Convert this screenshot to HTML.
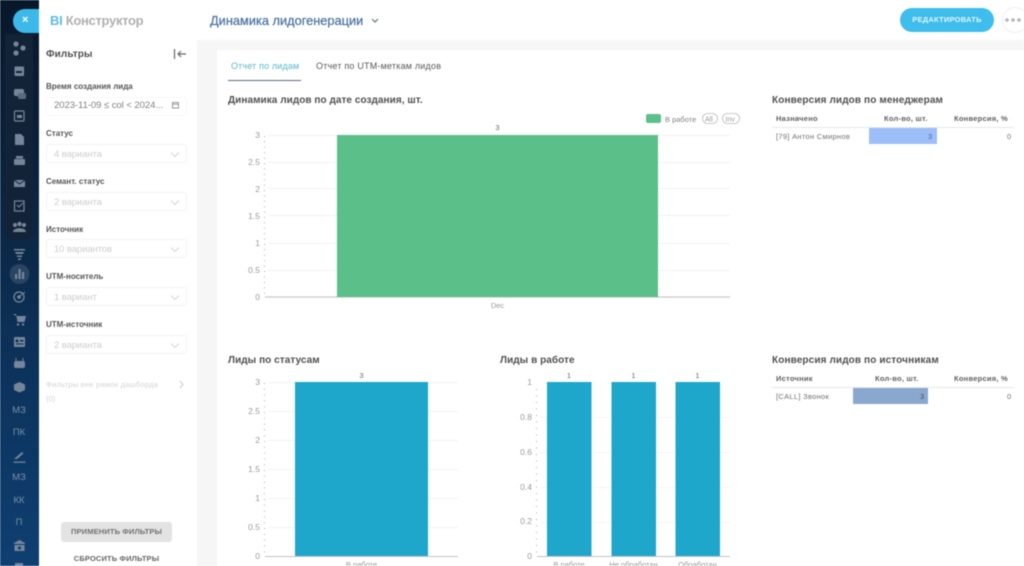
<!DOCTYPE html>
<html lang="ru"><head><meta charset="utf-8"><style>
html,body{margin:0;padding:0;background:#fff}
body{width:1024px;height:566px;overflow:hidden;position:relative;font-family:"Liberation Sans","Noto Sans CJK SC",sans-serif}
.a{position:absolute;white-space:nowrap}
#w{position:absolute;left:0;top:0;width:1024px;height:566px;overflow:hidden;filter:blur(.5px)}
.lb{left:46px;font-size:8px;font-weight:bold;color:#555;letter-spacing:0}
.sel{left:46px;width:141px;height:19px;box-sizing:border-box;border:1px solid #f3f3f3;border-radius:3px;background:#fff;font-size:9.5px;color:#cdcdcd;line-height:19px;text-indent:7px;letter-spacing:-.1px}
.sel svg{position:absolute;right:6px;top:6px}
.h{font-size:10px;font-weight:bold;color:#505050;letter-spacing:.05px}
.th{font-size:7.5px;font-weight:bold;color:#5f5f5f;letter-spacing:.25px}
.td{font-size:7.5px;color:#707070;letter-spacing:.3px}
.nt{left:6px;width:26px;text-align:center;color:#7a8fa6;font-size:9.5px}
</style></head><body><div id="w">

<!-- left navigation -->
<div class="a" style="left:0;top:0;width:39px;height:566px;background:linear-gradient(180deg,#08182b 0%,#0b2440 35%,#0c3158 60%,#0f3f72 100%)"></div>
<div class="a" style="left:5px;top:34px;width:28px;height:206px;background:#122338;border-radius:0 0 9px 9px"></div>
<div class="a" style="left:13px;top:9px;width:26px;height:24px;background:#3db9e9;border-radius:12px 0 0 12px"></div>
<div class="a" style="left:22px;top:14px;font-size:11px;color:#fff;font-weight:bold">×</div>

<svg class="a" style="left:0;top:0" width="39" height="566" fill="#75869a">
<circle cx="16" cy="44" r="2.600"/><circle cx="23" cy="48" r="2.600"/><circle cx="16" cy="53" r="2.600"/>
<rect x="14.500" y="66.500" width="9.500" height="9.500" rx="1"/><rect x="16" y="71" width="6" height="2" fill="#122338"/>
<rect x="14" y="89" width="10" height="7" rx="1.5"/><rect x="18" y="93" width="8" height="6" rx="1.5" fill="#5a6b80"/>
<rect x="14.5" y="111" width="9.5" height="10" rx="1" fill="none" stroke="#75869a" stroke-width="1.2"/><rect x="17" y="115" width="5" height="3"/>
<path d="M15 134h6l3 3v8h-9z"/>
<rect x="14" y="159" width="11" height="6" rx="1"/><rect x="16" y="156" width="7" height="2.5"/>
<path d="M14 180h11v7H14z"/><path d="M14 180l5.500 4 5.500-4" stroke="#122338" fill="none"/>
<rect x="14.500" y="201" width="9.500" height="10" fill="none" stroke="#75869a" stroke-width="1.200"/><path d="M17 205l2 2 4-4" stroke="#75869a" fill="none"/>
<circle cx="15" cy="225" r="2"/><circle cx="19.500" cy="224" r="2.200"/><circle cx="24" cy="225" r="2"/><path d="M13 232c0-5 13-5 13 0z"/>
<path d="M14 249h11v1.500H14zM15 252h9l-1 2h-7zM17 255.500h5v1.500h-5z"/><path d="M18 258.500h3v1.500h-3z"/>
<circle cx="19.500" cy="274" r="10" fill="#2a4461"/>
<rect x="15" y="274" width="2.200" height="5"/><rect x="18.500" y="269" width="2.200" height="10"/><rect x="22" y="272" width="2.200" height="7"/>
<circle cx="19" cy="297" r="5" fill="none" stroke="#75869a" stroke-width="1.300"/><circle cx="19" cy="297" r="1.800"/><path d="M20 296l5-4" stroke="#75869a"/>
<path d="M13 314h3l1.500 8h7l1.500-6H16" /><circle cx="18" cy="324.500" r="1.200"/><circle cx="23" cy="324.500" r="1.200"/>
<rect x="14" y="337" width="11" height="10" rx="1"/><circle cx="17" cy="341" r="1.500" fill="#0f3055"/><rect x="20" y="340" width="3.500" height="1.500" fill="#0f3055"/><rect x="16" y="343.500" width="7.500" height="1" fill="#0f3055"/>
<rect x="14" y="361" width="11" height="7" rx="2"/><path d="M16 361v-3M23 361v-3" stroke="#75869a"/>
<path d="M19.500 382l5.500 2.500v5.500l-5.500 2.500-5.500-2.500v-5.500z"/>
<path d="M14 459l8-7 1.500 1.500-6.500 5.500zM13.500 461.500h12v1.200h-12z"/>
<path d="M14 543l5.500-3 5.500 3v1H14zM14.500 545h10v6h-10z"/><circle cx="19.500" cy="548" r="1.500" fill="#103864"/>
<rect x="15" y="563" width="8" height="3"/>
</svg>
<div class="a nt" style="top:405px">МЗ</div>
<div class="a nt" style="top:427px">ПК</div>
<div class="a nt" style="top:472px">МЗ</div>
<div class="a nt" style="top:495px">КК</div>
<div class="a nt" style="top:517px">П</div>

<!-- header -->
<div class="a" style="left:50px;top:13px;font-size:13px;font-weight:bold;color:#b0b0b0;letter-spacing:-.3px"><span style="color:#5cbbe9">BI</span> Конструктор</div>
<div class="a" style="left:210px;top:13px;font-size:12.800px;color:#4d739f;-webkit-text-stroke:.25px #4d739f">Динамика лидогенерации</div>
<svg class="a" style="left:371px;top:17px" width="8" height="7"><path d="M1 2l3 3 3-3" fill="none" stroke="#5f7186" stroke-width="1.200"/></svg>
<div class="a" style="left:900px;top:8px;width:94px;height:24px;border-radius:12px;background:#3fbdec;color:#e3f6fd;font-size:7.500px;font-weight:bold;text-align:center;line-height:24px;letter-spacing:.25px">РЕДАКТИРОВАТЬ</div>
<div class="a" style="left:1002px;top:7px;width:26px;height:26px;border:1px solid #eee;border-radius:50%;box-sizing:border-box"></div>
<svg class="a" style="left:1004px;top:17px" width="20" height="6" fill="#b5b5b5"><circle cx="3" cy="3" r="1.800"/><circle cx="9" cy="3" r="1.800"/><circle cx="15" cy="3" r="1.800"/></svg>

<!-- gray gutter -->
<div class="a" style="left:197px;top:40px;width:827px;height:10px;background:#f6f6f6"></div>
<div class="a" style="left:197px;top:40px;width:20px;height:526px;background:#f6f6f6"></div>

<!-- filters -->
<div class="a" style="left:46px;top:49px;font-size:10px;font-weight:bold;color:#505050;letter-spacing:.1px">Фильтры</div>
<svg class="a" style="left:173px;top:48px" width="14" height="12"><path d="M1.500 1v10" stroke="#666" stroke-width="1.200"/><path d="M13 6H5M8 3L5 6l3 3" fill="none" stroke="#666" stroke-width="1.200"/></svg>
<div class="a lb" style="top:81.500px">Время создания лида</div>
<div class="a" style="left:54px;top:100px;font-size:9.500px;color:#808080;letter-spacing:-.05px">2023-11-09 ≤ col &lt; 2024...</div>
<div class="a" style="left:46px;top:97px;width:141px;height:19px;box-sizing:border-box;border:1px solid #f7f7f7;border-radius:3px"></div>
<svg class="a" style="left:171px;top:101px" width="9" height="9"><rect x="1.500" y="1.500" width="6" height="5.500" fill="none" stroke="#999"/><path d="M1.500 3.200h6" stroke="#999"/></svg>
<div class="a lb" style="top:129px">Статус</div>
<div class="a sel" style="top:144px">4 варианта<svg width="10" height="7"><path d="M1 1.500l4 4 4-4" fill="none" stroke="#d5d5d5"/></svg></div>
<div class="a lb" style="top:177px">Семант. статус</div>
<div class="a sel" style="top:192px">2 варианта<svg width="10" height="7"><path d="M1 1.500l4 4 4-4" fill="none" stroke="#d5d5d5"/></svg></div>
<div class="a lb" style="top:225px">Источник</div>
<div class="a sel" style="top:239px">10 вариантов<svg width="10" height="7"><path d="M1 1.500l4 4 4-4" fill="none" stroke="#d5d5d5"/></svg></div>
<div class="a lb" style="top:272px">UTM-носитель</div>
<div class="a sel" style="top:287px">1 вариант<svg width="10" height="7"><path d="M1 1.500l4 4 4-4" fill="none" stroke="#d5d5d5"/></svg></div>
<div class="a lb" style="top:320px">UTM-источник</div>
<div class="a sel" style="top:335px">2 варианта<svg width="10" height="7"><path d="M1 1.500l4 4 4-4" fill="none" stroke="#d5d5d5"/></svg></div>
<div class="a" style="left:46px;top:380px;font-size:7.500px;color:#d3d3d3;letter-spacing:.25px">Фильтры вне рамок дашборда</div>
<div class="a" style="left:46px;top:394px;font-size:7.500px;color:#d3d3d3">(0)</div>
<svg class="a" style="left:179px;top:380px" width="6" height="9"><path d="M1 1l3 3.500L1 8" fill="none" stroke="#d0d0d0" stroke-width="1.200"/></svg>
<div class="a" style="left:61px;top:522px;width:111px;height:20px;border-radius:3px;background:#e3e3e3;color:#707070;font-size:7.500px;font-weight:bold;text-align:center;line-height:20px;letter-spacing:.15px">ПРИМЕНИТЬ ФИЛЬТРЫ</div>
<div class="a" style="left:61px;top:554px;width:111px;color:#666;font-size:7.500px;font-weight:bold;text-align:center;letter-spacing:.15px">СБРОСИТЬ ФИЛЬТРЫ</div>

<!-- tabs -->
<div class="a" style="left:231px;top:61px;font-size:9px;color:#5bb5c9;letter-spacing:.15px">Отчет по лидам</div>
<div class="a" style="left:316px;top:61px;font-size:9px;color:#5a5a5a;letter-spacing:.2px">Отчет по UTM-меткам лидов</div>
<div class="a" style="left:228px;top:80px;width:73px;height:1px;background:#5f6c80"></div>

<div class="a h" style="left:228px;top:95px">Динамика лидов по дате создания, шт.</div>
<div class="a h" style="left:772px;top:95px;letter-spacing:.12px">Конверсия лидов по менеджерам</div>
<div class="a h" style="left:228px;top:355px">Лиды по статусам</div>
<div class="a h" style="left:500px;top:355px">Лиды в работе</div>
<div class="a h" style="left:772px;top:355px;letter-spacing:.12px">Конверсия лидов по источникам</div>

<!-- charts -->
<svg class="a" style="left:0;top:0" width="1024" height="566" font-family="Liberation Sans, sans-serif" font-size="8.500" fill="#999">
<!-- legend -->
<rect x="646" y="114" width="15" height="9" rx="2" fill="#5cc08a"/>
<text x="665" y="122" font-size="7.500" fill="#808080">В работе</text>
<rect x="702.500" y="113.500" width="15" height="10" rx="5" fill="#fff" stroke="#bbb" stroke-width=".8"/><text x="705" y="121.500" font-size="7" fill="#999">All</text>
<rect x="722.500" y="113.500" width="17" height="10" rx="5" fill="#fff" stroke="#bbb" stroke-width=".8"/><text x="725.500" y="121.500" font-size="7" fill="#999">Inv</text>

<!-- chart 1 -->
<g stroke="#f2f2f2"><path d="M268 135.500h462M268 162.500h462M268 188.500h462M268 215.500h462M268 243.500h462M268 270.500h462"/></g>
<path d="M265 297h465" stroke="#c8c8c8" stroke-width="1.200"/>
<path d="M264.500 136V297" stroke="#aaa" stroke-width="1" stroke-dasharray="1 4.400" fill="none"/>
<rect x="337" y="135" width="321" height="162" fill="#5bbf8a"/>
<text x="497.500" y="130" text-anchor="middle" font-size="7.500" fill="#666">3</text>
<text x="497.500" y="308" text-anchor="middle" font-size="7.500" fill="#999">Dec</text>
<g text-anchor="end"><text x="260" y="138">3</text><text x="260" y="165">2.5</text><text x="260" y="192">2</text><text x="260" y="219">1.5</text><text x="260" y="246">1</text><text x="260" y="273">0.5</text><text x="260" y="300">0</text></g>

<!-- chart 2 -->
<g stroke="#f4f4f4"><path d="M268 382.500h190M268 411.500h190M268 440.500h190M268 469.500h190M268 498.500h190M268 527.500h190"/></g>
<path d="M265 556.500h193" stroke="#c4c4c4"/>
<path d="M264.500 383V556" stroke="#aaa" stroke-dasharray="1 4.800"/>
<rect x="295" y="382" width="133" height="174" fill="#1fa6cb"/>
<text x="361.500" y="378" text-anchor="middle" font-size="7.500" fill="#666">3</text>
<text x="361.500" y="567" text-anchor="middle" font-size="7.500" fill="#999">В работе</text>
<g text-anchor="end"><text x="260" y="385">3</text><text x="260" y="414">2.5</text><text x="260" y="443">2</text><text x="260" y="472">1.5</text><text x="260" y="501">1</text><text x="260" y="530">0.5</text><text x="260" y="559">0</text></g>

<!-- chart 3 -->
<g stroke="#f5f5f5"><path d="M540 417.500h190M540 452.500h190M540 487.500h190M540 522.500h190"/></g>
<path d="M537 556.500h193" stroke="#c4c4c4"/>
<path d="M536.500 389V556" stroke="#aaa" stroke-dasharray="1 5.500"/>
<rect x="547" y="382" width="44.500" height="174" fill="#1fa6cb"/><rect x="611.500" y="382" width="44.500" height="174" fill="#1fa6cb"/><rect x="675.500" y="382" width="44.500" height="174" fill="#1fa6cb"/>
<g text-anchor="middle" font-size="7.500" fill="#666"><text x="569" y="378">1</text><text x="633.500" y="378">1</text><text x="697.500" y="378">1</text></g>
<g text-anchor="middle" font-size="7.500" fill="#999"><text x="569" y="567">В работе</text><text x="633.500" y="567">Не обработан</text><text x="697.500" y="567">Обработан</text></g>
<g text-anchor="end"><text x="532" y="385">1</text><text x="532" y="420">0.8</text><text x="532" y="455">0.6</text><text x="532" y="490">0.4</text><text x="532" y="524">0.2</text><text x="532" y="559">0</text></g>
</svg>

<!-- table 1 -->
<div class="a th" style="left:776px;top:114px">Назначено</div>
<div class="a th" style="left:884px;top:114px">Кол-во, шт.</div>
<div class="a th" style="left:954px;top:114px">Конверсия, %</div>
<div class="a" style="left:772px;top:127px;width:242px;height:1px;background:#e8e8e8"></div>
<div class="a" style="left:869px;top:128px;width:68px;height:16px;background:#9dbef8"></div>
<div class="a td" style="left:776px;top:132px">[79] Антон Смирнов</div>
<div class="a td" style="left:928px;top:132px;color:#4a6fb0">3</div>
<div class="a td" style="left:1007px;top:132px">0</div>

<!-- table 2 -->
<div class="a th" style="left:776px;top:374px">Источник</div>
<div class="a th" style="left:875px;top:374px">Кол-во, шт.</div>
<div class="a th" style="left:954px;top:374px">Конверсия, %</div>
<div class="a" style="left:772px;top:387px;width:242px;height:1px;background:#e8e8e8"></div>
<div class="a" style="left:853px;top:388px;width:75px;height:16px;background:#8aa7cd"></div>
<div class="a td" style="left:776px;top:392px">[CALL] Звонок</div>
<div class="a td" style="left:920px;top:392px;color:#3f5474">3</div>
<div class="a td" style="left:1007px;top:392px">0</div>

</div></body></html>
